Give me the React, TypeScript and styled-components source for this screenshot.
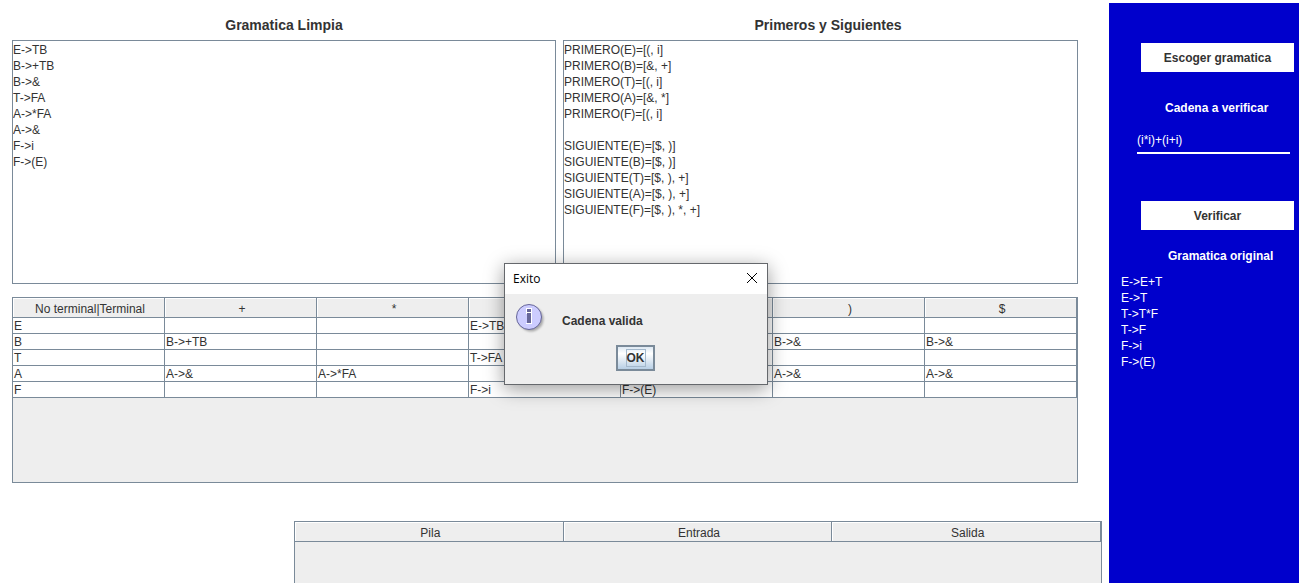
import { useId, useState } from "react";
import styled, { createGlobalStyle, css } from "styled-components";

const line = "#7a8a99";
const panel = "#eeeeee";
const ink = "#333333";

const GlobalStyle = createGlobalStyle`
  * { box-sizing: border-box; }
  body {
    margin: 0;
    background: #ffffff;
    color: ${ink};
    font: 12px/16px "Liberation Sans", Arial, sans-serif;
  }
`;

const Page = styled.div`
  display: flex;
  min-height: 100vh;
`;

const Main = styled.main`
  flex: 1;
  min-width: 0;
  display: flex;
  flex-direction: column;
  padding: 16px 7px 0 12px;
`;

const TextPanels = styled.section`
  display: flex;
  gap: 7px;
  margin: 0 24px 13px 0;
`;

const TextPanel = styled.div<{ $grow: number }>`
  flex: ${(p) => p.$grow} 1 0;
  min-width: 0;
`;

const PanelTitle = styled.label<{ $indent: number }>`
  display: block;
  height: 24px;
  padding-left: ${(p) => p.$indent}px;
  font-size: 14px;
  font-weight: bold;
  line-height: 18px;
  text-align: center;
`;

const bareField = css`
  display: block;
  width: 100%;
  margin: 0;
  border-radius: 0;
  outline: 0;
  font: inherit;
`;

const TextArea = styled.textarea`
  ${bareField}
  height: 244px;
  padding: 1px 0;
  border: 1px solid ${line};
  background: #ffffff;
  color: ${ink};
  resize: none;
`;

const AnalysisPane = styled.section`
  min-height: 186px;
  margin: 0 24px 38px 0;
  border: 1px solid ${line};
  background: ${panel};
`;

const StackPane = styled.section`
  flex: 1;
  min-height: 62px;
  margin-left: 282px;
  border: 1px solid ${line};
  border-bottom: 0;
  background: ${panel};
`;

const Table = styled.table`
  width: 100%;
  table-layout: fixed;
  border-collapse: separate;
  border-spacing: 0;
`;

const HeaderCell = styled.th`
  height: 20px;
  padding: 3px 0 0 3px;
  border: solid ${line};
  border-width: 0 1px 1px 0;
  background: ${panel};
  box-shadow: inset 1px 1px #ffffff;
  font-weight: normal;
`;

const Cell = styled.td`
  height: 16px;
  padding: 1px 1px 0;
  border: solid ${line};
  border-width: 0 1px 1px 0;
  background: #ffffff;
  line-height: 14px;
  white-space: nowrap;
`;

const Sidebar = styled.aside`
  flex: 0 0 190px;
  margin-top: 3px;
  padding: 40px 5px 0 12px;
  background: #0000cc;
  color: #ffffff;
`;

const Controls = styled.form`
  padding-left: 20px;
`;

const FlatButton = styled.button`
  display: block;
  width: 100%;
  height: 29px;
  padding: 0;
  border: 0;
  background: #ffffff;
  color: ${ink};
  font: inherit;
  font-weight: bold;
`;

const Caption = styled.label`
  display: block;
  padding-left: 24px;
  font-weight: bold;
`;

const InputCaption = styled(Caption)`
  margin: 28px 0 13px;
`;

const ListCaption = styled(Caption)`
  margin-top: 18px;
  padding-left: 47px;
`;

const InputRow = styled.div`
  margin: 0 4px 47px -4px;
`;

const TextInput = styled.input`
  ${bareField}
  height: 25px;
  padding: 0 0 1px;
  border: 0;
  border-bottom: 2px solid #ffffff;
  background: transparent;
  color: #ffffff;
`;

const OriginalGrammar = styled.textarea`
  ${bareField}
  height: 200px;
  margin-top: 10px;
  padding: 0;
  border: 0;
  background: transparent;
  color: #ffffff;
  resize: none;
`;

const Dialog = styled.div`
  position: absolute;
  top: 263px;
  left: 504px;
  width: 264px;
  border: 1px solid #65686c;
  background: ${panel};
  box-shadow: 0 4px 18px rgba(0, 0, 0, 0.4);
`;

const TitleBar = styled.header`
  display: flex;
  align-items: center;
  justify-content: space-between;
  height: 30px;
  padding: 0 9px 0 8px;
  background: #ffffff;
  color: #000000;
  font-family: "Open Sans", sans-serif;
`;

const CloseButton = styled.button`
  display: flex;
  padding: 0 0 2px;
  border: 0;
  background: none;
`;

const Message = styled.div`
  display: flex;
  gap: 15px;
  height: 51px;
  padding: 9px 0 0 10px;
  font-weight: bold;
  line-height: 36px;
`;

const Actions = styled.footer`
  display: flex;
  justify-content: center;
  padding: 0 1px 13px 0;
`;

const OkButton = styled.button`
  display: flex;
  align-items: center;
  justify-content: center;
  width: 39px;
  height: 26px;
  padding: 0;
  border: 2px solid ${line};
  background: linear-gradient(#dde8f3, #ffffff 30%, #b8cfe5);
  color: ${ink};
  font: inherit;
  font-weight: bold;
`;

const FocusRing = styled.span`
  border: 1px solid #a3b8cc;
`;

const cleanGrammar = ["E->TB", "B->+TB", "B->&", "T->FA", "A->*FA", "A->&", "F->i", "F->(E)"];

const firstAndFollow = [
  "PRIMERO(E)=[(, i]",
  "PRIMERO(B)=[&, +]",
  "PRIMERO(T)=[(, i]",
  "PRIMERO(A)=[&, *]",
  "PRIMERO(F)=[(, i]",
  "",
  "SIGUIENTE(E)=[$, )]",
  "SIGUIENTE(B)=[$, )]",
  "SIGUIENTE(T)=[$, ), +]",
  "SIGUIENTE(A)=[$, ), +]",
  "SIGUIENTE(F)=[$, ), *, +]",
];

const originalGrammar = ["E->E+T", "E->T", "T->T*F", "T->F", "F->i", "F->(E)"];

const analysisColumns = ["No terminal|Terminal", "+", "*", "i", "(", ")", "$"];

const analysisRows = [
  ["E", "", "", "E->TB", "", "", ""],
  ["B", "B->+TB", "", "", "", "B->&", "B->&"],
  ["T", "", "", "T->FA", "", "", ""],
  ["A", "A->&", "A->*FA", "", "", "A->&", "A->&"],
  ["F", "", "", "F->i", "F->(E)", "", ""],
];

const stackColumns = ["Pila", "Entrada", "Salida"];

type ReadOnlyPanelProps = { title: string; lines: string[]; grow: number; indent?: number };

function ReadOnlyPanel({ title, lines, grow, indent = 0 }: ReadOnlyPanelProps) {
  const id = useId();
  return (
    <TextPanel $grow={grow}>
      <PanelTitle htmlFor={id} $indent={indent}>{title}</PanelTitle>
      <TextArea id={id} readOnly value={lines.join("\n")} />
    </TextPanel>
  );
}

function DataTable({ columns, rows = [] }: { columns: string[]; rows?: string[][] }) {
  return (
    <Table>
      <thead>
        <tr>
          {columns.map((c) => (
            <HeaderCell key={c} scope="col">{c}</HeaderCell>
          ))}
        </tr>
      </thead>
      <tbody>
        {rows.map((row) => (
          <tr key={row[0]}>
            {row.map((value, i) => (
              <Cell key={columns[i]}>{value}</Cell>
            ))}
          </tr>
        ))}
      </tbody>
    </Table>
  );
}

function InfoIcon() {
  return (
    <svg width="32" height="32" viewBox="0 0 32 32" aria-hidden="true">
      <defs>
        <filter id="info-shadow" x="-20%" y="-20%" width="150%" height="150%">
          <feGaussianBlur stdDeviation="1.3" />
        </filter>
      </defs>
      <circle cx="16" cy="16" r="12.5" fill="#a8a8a8" filter="url(#info-shadow)" />
      <circle cx="14" cy="14" r="12.5" fill="#ccccff" stroke="#666699" />
      <path d="M11 5h6v16h-6v-1h1v-9h-1z" fill="#ffffff" />
      <path d="M12 6h4v3h-4zM12 10h4v10h-4z" fill="#666699" />
    </svg>
  );
}

export default function App() {
  const [text, setText] = useState("(i*i)+(i+i)");
  const [open, setOpen] = useState(true);
  const close = () => setOpen(false);

  return (
    <>
      <GlobalStyle />
      <Page>
        <Main>
          <TextPanels>
            <ReadOnlyPanel title="Gramatica Limpia" lines={cleanGrammar} grow={544} />
            <ReadOnlyPanel title="Primeros y Siguientes" lines={firstAndFollow} grow={515} indent={15} />
          </TextPanels>
          <AnalysisPane>
            <DataTable columns={analysisColumns} rows={analysisRows} />
          </AnalysisPane>
          <StackPane>
            <DataTable columns={stackColumns} />
          </StackPane>
        </Main>
        <Sidebar>
          <Controls
            onSubmit={(e) => {
              e.preventDefault();
              setOpen(true);
            }}
          >
            <FlatButton type="button">Escoger gramatica</FlatButton>
            <InputCaption htmlFor="cadena">Cadena a verificar</InputCaption>
            <InputRow>
              <TextInput id="cadena" value={text} onChange={(e) => setText(e.target.value)} />
            </InputRow>
            <FlatButton type="submit">Verificar</FlatButton>
          </Controls>
          <ListCaption htmlFor="original">Gramatica original</ListCaption>
          <OriginalGrammar id="original" readOnly value={originalGrammar.join("\n")} />
        </Sidebar>
      </Page>
      {open && (
        <Dialog role="dialog" aria-labelledby="dialog-title">
          <TitleBar>
            <span id="dialog-title">Exito</span>
            <CloseButton type="button" aria-label="Cerrar" onClick={close}>
              <svg width="12" height="12" viewBox="0 0 12 12" stroke="#000000" fill="none" aria-hidden="true">
                <path d="M1 1l10 10M11 1L1 11" />
              </svg>
            </CloseButton>
          </TitleBar>
          <Message>
            <InfoIcon />
            Cadena valida
          </Message>
          <Actions>
            <OkButton type="button" onClick={close}>
              <FocusRing>OK</FocusRing>
            </OkButton>
          </Actions>
        </Dialog>
      )}
    </>
  );
}
